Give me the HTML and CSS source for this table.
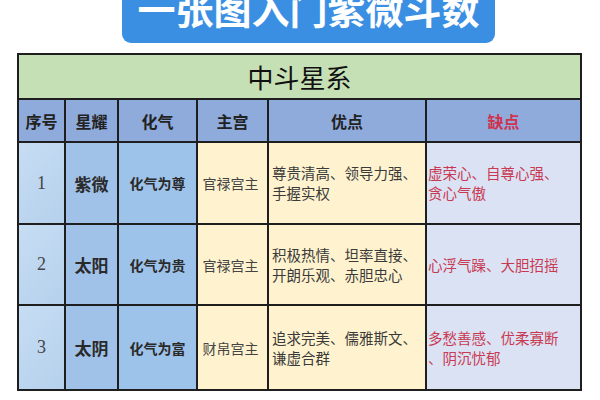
FILE: index.html
```html
<!DOCTYPE html>
<html lang="zh">
<head>
<meta charset="utf-8">
<link rel="stylesheet" href="styles.css">
</head>
<body>
<div class="banner"><span class="banner-text">一张图入门紫微斗数</span></div>
<table class="stars">
  <colgroup>
    <col class="c1"><col class="c2"><col class="c3"><col class="c4"><col class="c5"><col class="c6">
  </colgroup>
  <tr class="title-row"><td colspan="6">中斗星系</td></tr>
  <tr class="head-row">
    <td>序号</td><td>星耀</td><td>化气</td><td>主宫</td><td>优点</td><td class="red">缺点</td>
  </tr>
  <tr class="r1">
    <td class="num">1</td><td class="star">紫微</td><td class="qi">化气为尊</td><td class="gong">官禄宫主</td>
    <td class="good">尊贵清高、领导力强、<br>手握实权</td>
    <td class="bad">虚荣心、自尊心强、<br>贪心气傲</td>
  </tr>
  <tr class="r2">
    <td class="num">2</td><td class="star">太阳</td><td class="qi">化气为贵</td><td class="gong">官禄宫主</td>
    <td class="good">积极热情、坦率直接、<br>开朗乐观、赤胆忠心</td>
    <td class="bad">心浮气躁、大胆招摇</td>
  </tr>
  <tr class="r3">
    <td class="num">3</td><td class="star">太阴</td><td class="qi">化气为富</td><td class="gong">财帛宫主</td>
    <td class="good">追求完美、儒雅斯文、<br>谦虚合群</td>
    <td class="bad">多愁善感、优柔寡断<br>、阴沉忧郁</td>
  </tr>
</table>
</body>
</html>
```

FILE: styles.css
```css
html, body {
  margin: 0;
  padding: 0;
  background: #ffffff;
  font-family: "Noto Sans CJK SC", "Noto Sans", sans-serif;
}
body {
  overflow: hidden;
  height: 400px;
}
.banner {
  margin: -20px 0 0 122px;
  width: 373px;
  height: 63px;
  box-sizing: border-box;
  padding-top: 9px;
  background: #3b8fe2;
  border-radius: 0 0 9px 9px;
  text-align: center;
}
.banner-text {
  display: block;
  font-size: 38px;
  line-height: 38px;
  font-weight: 700;
  color: #ffffff;
  letter-spacing: 0;
}
.stars {
  margin: 10px 0 0 17px;
  width: 563px;
  table-layout: fixed;
  border-collapse: collapse;
  border: 2px solid #1e1e1e;
}
.stars td {
  border: 2px solid #1e1e1e;
  padding: 0;
  text-align: center;
  vertical-align: middle;
  color: #2a2a2a;
}
.c1 { width: 47px; }
.c2 { width: 53px; }
.c3 { width: 79px; }
.c4 { width: 71px; }
.c5 { width: 158px; }
.c6 { width: 155px; }

.title-row td {
  height: 43px;
  background: #c6e0b5;
  font-size: 26px;
  color: #111;
  font-weight: 400;
}
.head-row td {
  height: 41px;
  background: #8eabdc;
  font-size: 16px;
  font-weight: 700;
  color: #222;
}
.head-row td.red { color: #d1324f; }

.r1 td { height: 80px; }
.r2 td { height: 79px; }
.r3 td { height: 83px; }

.num {
  background: linear-gradient(135deg, #c6ddf3, #b6d1ed);
  font-family: "Liberation Serif", serif;
  font-size: 18px;
  color: #444 !important;
}
.star {
  background: #a0c1e8;
  font-size: 17px;
  font-weight: 700;
}
.qi {
  background: #9ec3ea;
  font-size: 14px;
  font-weight: 700;
}
.gong {
  background: #fff3cf;
  font-size: 14px;
  color: #444 !important;
  padding-right: 4px !important;
}
.good {
  background: #fff3cf;
  text-align: left !important;
  padding-left: 3px !important;
  font-size: 14.5px;
  line-height: 20px;
  color: #3a3a3a !important;
}
.bad {
  background: #dbe2f4;
  text-align: left !important;
  padding-left: 1px !important;
  font-size: 14.5px;
  line-height: 20px;
  color: #c83a52 !important;
}
```
